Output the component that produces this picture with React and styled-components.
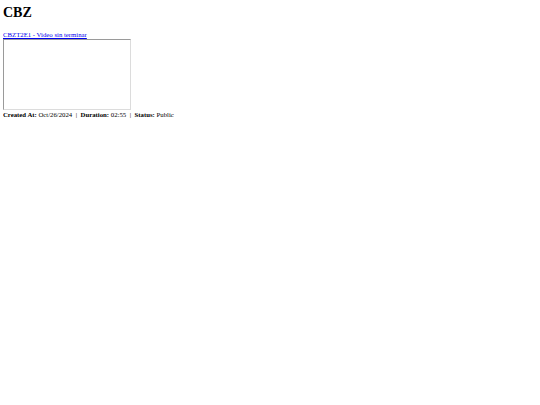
import styled, { createGlobalStyle } from "styled-components";

const GlobalStyle = createGlobalStyle`
  body {
    margin: 3px;
    font-family: "Liberation Serif", "Times New Roman", serif;
    font-size: 6.75px;
    color: #000;
    background: #fff;
  }
`;

const Title = styled.h1`
  font-size: 14px;
  font-weight: bold;
  margin: 1px 0 10px;
  line-height: 17px;
`;

const VideoItem = styled.div`
  display: flex;
  flex-direction: column;
  align-items: flex-start;
`;

const VideoLink = styled.a`
  color: #0000ee;
  text-decoration: underline;
  line-height: 8px;
`;

const Player = styled.div`
  width: 126px;
  height: 69px;
  border: 1px solid #dcdcdc;
  border-top-color: #9a9a9a;
  border-left-color: #9a9a9a;
  background: #fff;
`;

const Meta = styled.div`
  line-height: 8px;
  margin-top: 1px;
`;

const Label = styled.strong`
  font-weight: bold;
`;

const Sep = styled.span`
  margin: 0 3.5px;
`;

export default function App() {
  return (
    <>
      <GlobalStyle />
      <Title>CBZ</Title>
      <VideoItem>
        <VideoLink href="#">CBZT2E1 - Video sin terminar</VideoLink>
        <Player />
        <Meta>
          <Label>Created At:</Label> Oct/26/2024<Sep>|</Sep>
          <Label>Duration:</Label> 02:55<Sep>|</Sep>
          <Label>Status:</Label> Public
        </Meta>
      </VideoItem>
    </>
  );
}
